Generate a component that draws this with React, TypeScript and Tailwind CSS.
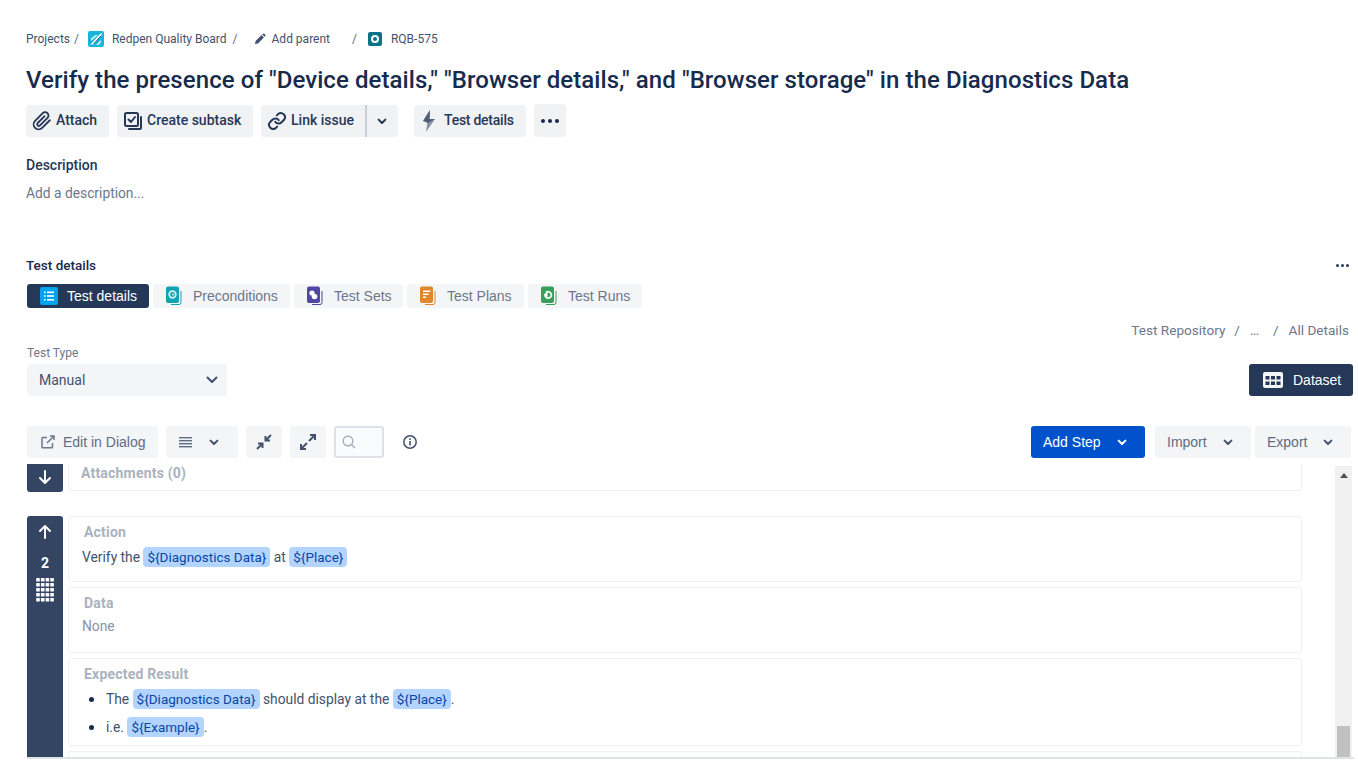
import React from "react";

const Chev = ({ c = "#42526e", s = 16 }: { c?: string; s?: number }) => (
  <svg width={s} height={s} viewBox="0 0 16 16" fill="none"><path d="M4.6 6.6 8 10l3.4-3.4" stroke={c} strokeWidth="2" strokeLinecap="round" strokeLinejoin="round" /></svg>
);

const Var = ({ children }: { children: React.ReactNode }) => (
  <span className="inline-block h-[20px] leading-[20px] px-[4px] rounded-[4px] bg-[#b3d4ff] text-[#0747a6] text-[13.5px]">{children}</span>
);

const TabIcon = ({ c, children }: { c: string; children?: React.ReactNode }) => (
  <svg width="18" height="20" viewBox="0 0 18 20" fill="none">
    <path d="M16 5v11.5a2 2 0 0 1-2 2H6" stroke={c} strokeWidth="1" fill="none" />
    <rect x="1" y="0.5" width="13" height="16.5" rx="2" fill={c} />
    {children}
  </svg>
);

const Tab = ({ label, icon, w, gap = "gap-[10px]" }: { label: string; icon: React.ReactNode; w: string; gap?: string }) => (
  <div className={`${w} ${gap} h-[24px] rounded-[3px] bg-[#f4f5f7] flex items-center pl-[12px] text-[14px] text-[#6b778c]`}>
    {icon}
    <span>{label}</span>
  </div>
);

const ABtn = ({ children, cls }: { children: React.ReactNode; cls: string }) => (
  <div className={`h-[32px] rounded-[3px] bg-[#f1f2f4] flex items-center whitespace-nowrap text-[14px] font-medium text-[#253858] ${cls}`}>{children}</div>
);

const TBtn = ({ children, cls }: { children: React.ReactNode; cls: string }) => (
  <div className={`h-[32px] rounded-[3px] bg-[#f4f5f7] flex items-center text-[14px] text-[#5e6c84] ${cls}`}>{children}</div>
);

const Card = ({ title, h, children, mt = "mt-[5px]" }: { title: string; h: string; children?: React.ReactNode; mt?: string }) => (
  <div className={`${h} ${mt} w-[1234px] border border-[#f0f1f3] rounded-[3px] pl-[14px] pt-[5px] text-[13.8px] text-[#42526e]`}>
    <div className="font-bold text-[#aab2c0] text-[14px] tracking-[0.2px] leading-[20px] ml-[1px]">{title}</div>
    {children}
  </div>
);

const Grip = () => (
  <svg width="18" height="24" viewBox="0 0 18 24" fill="#fff">
    {[0, 1, 2, 3, 4].map((r) => [0, 1, 2, 3].map((c) => <rect key={`${r}${c}`} x={c * 4.7 + 0.2} y={r * 5} width="3.6" height="3.6" rx="0.6" />))}
  </svg>
);

export default function App() {
  return (
    <div className="w-[1358px] h-[772px] overflow-hidden bg-white relative font-['Roboto',sans-serif] text-[#172b4d]">
      <div className="pl-[26px] pt-[29px]">
        {/* breadcrumb */}
        <div className="h-[20px] flex items-center text-[12px] text-[#42526e]">
          <span>Projects</span>
          <span className="ml-[4px] text-[#5e6c84]">/</span>
          <svg className="ml-[9px]" width="16" height="16" viewBox="0 0 16 16">
            <rect width="16" height="16" rx="2" fill="#17b5dc" />
            <path d="M2.5 13.5 12 3l2-1-.6 2.6L5.5 13.5z" fill="#fff" />
            <path d="M3 7.5 7.5 4H10L3 10zM8 14l5-5v2.5L10.5 14z" fill="#d4f1f8" />
            <path d="M5.5 13 13 5" stroke="#0f5f8a" strokeWidth="1" />
          </svg>
          <span className="ml-[8px]">Redpen Quality Board</span>
          <span className="ml-[6px] text-[#5e6c84]">/</span>
          <svg className="ml-[16px]" width="12" height="12" viewBox="0 0 12 12" fill="#42526e"><path d="M1 11l.6-3L7.5 2.1l2.4 2.4L4 10.4zM8.2 1.4 9 .7a1 1 0 0 1 1.3 0l1 1a1 1 0 0 1 0 1.3l-.7.8z" /></svg>
          <span className="ml-[6px]">Add parent</span>
          <span className="ml-[22px] text-[#5e6c84]">/</span>
          <svg className="ml-[11px]" width="14" height="14" viewBox="0 0 14 14">
            <rect width="14" height="14" rx="2" fill="#0b7285" />
            <circle cx="7" cy="7" r="3" fill="none" stroke="#fff" strokeWidth="2" />
          </svg>
          <span className="ml-[9px]">RQB-575</span>
        </div>
        {/* title */}
        <h1 className="mt-[13px] h-[36px] leading-[36px] text-[24px] tracking-[0.07px] font-medium text-[#172b4d] whitespace-nowrap">
          Verify the presence of "Device details," "Browser details," and "Browser storage" in the Diagnostics Data
        </h1>
        {/* actions */}
        <div className="mt-[6px] flex items-center">
          <ABtn cls="w-[83px] pl-[6px] gap-[4px]">
            <svg width="20" height="20" viewBox="0 0 24 24" fill="none" stroke="#253858" strokeWidth="2.2" strokeLinecap="round" strokeLinejoin="round"><path d="M21.4 11.1 12.2 20.3a6 6 0 0 1-8.5-8.5l9.2-9.2a4 4 0 0 1 5.7 5.7l-9.2 9.2a2 2 0 0 1-2.8-2.8l8.5-8.5" /></svg>
            Attach
          </ABtn>
          <ABtn cls="w-[136px] ml-[8px] pl-[6px] gap-[4px]">
            <svg width="20" height="20" viewBox="0 0 20 20" fill="none" stroke="#253858" strokeWidth="2"><rect x="2" y="2" width="13" height="13" rx="1.5" /><path d="M5.5 8.5 8 11l4-5" strokeLinecap="round" strokeLinejoin="round" /><path d="M18 6v11a1 1 0 0 1-1 1H6" strokeLinecap="round" /></svg>
            Create subtask
          </ABtn>
          <ABtn cls="w-[137px] ml-[8px] pl-[6px] gap-[4px]">
            <svg width="20" height="20" viewBox="0 0 24 24" fill="none" stroke="#253858" strokeWidth="2.4" strokeLinecap="round" strokeLinejoin="round"><path d="M10 13a5 5 0 0 0 7.5.5l3-3a5 5 0 0 0-7-7l-1.7 1.7" /><path d="M14 11a5 5 0 0 0-7.5-.5l-3 3a5 5 0 0 0 7 7l1.7-1.7" /></svg>
            <span>Link issue</span>
            <span className="ml-[7px] w-[2px] h-[32px] bg-[#c9ced8]" />
            <span className="ml-[3px]"><Chev c="#253858" /></span>
          </ABtn>
          <ABtn cls="w-[112px] ml-[16px] pl-[7px] gap-[7px] tracking-[-0.25px]">
            <svg width="16" height="24" viewBox="0 0 16 24"><path d="M9 1 2 12h4.5L5 23l9-13H8.5z" fill="#8993a4" /><path d="M9 1 2 12l5 2 7-4H8.5z" fill="#505f79" /></svg>
            Test details
          </ABtn>
          <ABtn cls="w-[32px] h-[33px] ml-[8px] justify-center gap-[3px]">
            <span className="w-[4px] h-[4px] rounded-full bg-[#172b4d]" />
            <span className="w-[4px] h-[4px] rounded-full bg-[#172b4d]" />
            <span className="w-[4px] h-[4px] rounded-full bg-[#172b4d]" />
          </ABtn>
        </div>
        {/* description */}
        <div className="mt-[18px] h-[20px] leading-[20px] text-[14px] font-medium text-[#253858]">Description</div>
        <div className="mt-[8px] h-[20px] leading-[20px] text-[13.8px] text-[#6b778c]">Add a description...</div>
        {/* test details */}
        <div className="mt-[52px] h-[20px] leading-[20px] text-[13.5px] font-medium text-[#172b4d] flex items-center pr-[9px]">
          <span>Test details</span>
          <span className="ml-auto flex gap-[2px]">
            <span className="w-[3px] h-[3px] rounded-full bg-[#253858]" />
            <span className="w-[3px] h-[3px] rounded-full bg-[#253858]" />
            <span className="w-[3px] h-[3px] rounded-full bg-[#253858]" />
          </span>
        </div>
        {/* lower area in Arial metrics */}
        <div className="font-['Liberation_Sans',Arial,sans-serif]">
          <div className="mt-[9px] ml-[1px] flex gap-[4px]">
            <div className="w-[122px] h-[24px] rounded-[3px] bg-[#253858] flex items-center pl-[13px] gap-[9px] text-[14px] text-white">
              <svg width="18" height="18" viewBox="0 0 18 18"><rect width="18" height="18" rx="2" fill="#00a3ed" /><g fill="#fff"><rect x="4" y="4.5" width="1.6" height="1.6" /><rect x="7" y="4.5" width="7" height="1.6" /><rect x="4" y="8.2" width="1.6" height="1.6" /><rect x="7" y="8.2" width="7" height="1.6" /><rect x="4" y="12" width="1.6" height="1.6" /><rect x="7" y="12" width="7" height="1.6" /></g></svg>
              <span>Test details</span>
            </div>
            <Tab w="w-[137px]" label="Preconditions" icon={<TabIcon c="#12a3b0"><circle cx="7.5" cy="8.5" r="4.2" fill="#cdeef2" /><circle cx="7.5" cy="8.5" r="2.4" fill="#12a3b0" /><circle cx="8" cy="8.5" r="1" fill="#cdeef2" /></TabIcon>} />
            <Tab w="w-[109px]" label="Test Sets" icon={<TabIcon c="#4f46a5"><circle cx="6" cy="7" r="2.6" fill="#fff" /><circle cx="8.5" cy="10.5" r="2.8" fill="#fff" /></TabIcon>} />
            <Tab w="w-[117px]" label="Test Plans" icon={<TabIcon c="#e0862b"><path d="M4 4.5h7.5v1.6H4zM4 7.5h5.5v1.6H4zM4 10.5h3v1.6H4z" fill="#fff" /></TabIcon>} />
            <Tab w="w-[114px]" label="Test Runs" icon={<TabIcon c="#36a05a"><path d="M5 9a3.2 3.2 0 1 0 1-2.4" fill="none" stroke="#fff" strokeWidth="1.7" /><path d="M3.5 8.5 7.5 6v5z" fill="#fff" /></TabIcon>} />
          </div>
          <div className="mt-[13px] pr-[9px] h-[18px] flex justify-end items-center text-[13.6px] text-[#6b778c] font-['Roboto',sans-serif]">
            <span>Test Repository</span>
            <span className="ml-[9px]">/</span>
            <span className="ml-[10px] w-[13px] tracking-[1px]">…</span>
            <span className="ml-[10px]">/</span>
            <span className="ml-[10px]">All Details</span>
          </div>
          <div className="flex items-end ml-[1px] pr-[5px]">
            <div>
              <div className="mt-[6px] h-[16px] leading-[16px] text-[12px] font-['Roboto',sans-serif] text-[#6b778c]">Test Type</div>
              <div className="mt-[3px] w-[200px] h-[32px] rounded-[3px] bg-[#f4f5f7] flex items-center justify-between pl-[12px] pr-[7px] text-[14px] text-[#42526e] font-['Roboto',sans-serif]">
                Manual
                <svg width="16" height="16" viewBox="0 0 16 16" fill="none"><path d="M3.5 5.5 8 10l4.5-4.5" stroke="#42526e" strokeWidth="2" strokeLinecap="round" strokeLinejoin="round" /></svg>
              </div>
            </div>
            <div className="ml-auto w-[104px] h-[32px] rounded-[3px] bg-[#253858] flex items-center pl-[14px] gap-[10px] text-[14px] text-white">
              <svg width="20" height="16" viewBox="0 0 20 16"><rect width="20" height="16" rx="2" fill="#f4f5f7" /><g fill="#253858"><rect x="2.5" y="4" width="4" height="3.5" /><rect x="8" y="4" width="4" height="3.5" /><rect x="13.5" y="4" width="4" height="3.5" /><rect x="2.5" y="9.5" width="4" height="3.5" /><rect x="8" y="9.5" width="4" height="3.5" /><rect x="13.5" y="9.5" width="4" height="3.5" /></g></svg>
              Dataset
            </div>
          </div>
          {/* toolbar */}
          <div className="mt-[30px] ml-[1px] flex items-center pr-[7px]">
            <TBtn cls="w-[131px] pl-[13px] gap-[7px]">
              <svg width="16" height="16" viewBox="0 0 16 16" fill="none" stroke="#6b778c" strokeWidth="1.5"><path d="M12.5 9v4a.8.8 0 0 1-.8.8H2.8a.8.8 0 0 1-.8-.8V4.2a.8.8 0 0 1 .8-.8H7" /><path d="M7 9l7-7M10 2h4v4" /></svg>
              Edit in Dialog
            </TBtn>
            <TBtn cls="w-[72px] ml-[8px] pl-[13px] gap-[13px]">
              <svg width="14" height="12" viewBox="0 0 14 12" fill="#5e6c84"><rect y="1" width="13" height="1.4" /><rect y="4" width="13" height="1.4" /><rect y="7" width="13" height="1.4" /><rect y="10" width="13" height="1.4" /></svg>
              <Chev />
            </TBtn>
            <TBtn cls="w-[36px] ml-[8px] justify-center">
              <svg width="18" height="18" viewBox="0 0 18 18" fill="none" stroke="#42526e" strokeWidth="2"><path d="M16 2l-5 5M10.5 3v4.5H15" /><path d="M2 16l5-5M7.5 15v-4.5H3" /></svg>
            </TBtn>
            <TBtn cls="w-[36px] ml-[8px] justify-center">
              <svg width="18" height="18" viewBox="0 0 18 18" fill="none" stroke="#42526e" strokeWidth="2"><path d="M10 8l6-6M11 2h5v5" /><path d="M8 10l-6 6M7 16H2v-5" /></svg>
            </TBtn>
            <div className="w-[50px] h-[32px] ml-[8px] rounded-[3px] border-2 border-[#dfe1e6] bg-[#fafbfc] flex items-center pl-[5px]">
              <svg width="16" height="16" viewBox="0 0 16 16" fill="none" stroke="#a5adba" strokeWidth="1.4"><circle cx="7" cy="7" r="4.8" /><path d="M10.5 10.5l3.5 3.5" /></svg>
            </div>
            <svg className="ml-[18px]" width="16" height="16" viewBox="0 0 16 16" fill="none"><circle cx="8" cy="8" r="6.2" stroke="#42526e" strokeWidth="1.5" /><rect x="7.2" y="7" width="1.6" height="4.5" fill="#42526e" /><rect x="7.2" y="4.4" width="1.6" height="1.6" fill="#42526e" /></svg>
            <div className="ml-auto w-[114px] h-[32px] rounded-[3px] bg-[#0052cc] flex items-center pl-[12px] gap-[13px] text-[14px] text-white">
              Add Step
              <Chev c="#fff" />
            </div>
            <TBtn cls="w-[96px] ml-[10px] pl-[12px] gap-[13px]">Import<Chev /></TBtn>
            <TBtn cls="w-[96px] ml-[4px] pl-[12px] gap-[13px]">Export<Chev /></TBtn>
          </div>
        </div>
        {/* steps */}
        <div className="mt-[6px] ml-[1px] h-[293px] relative overflow-hidden flex font-['Roboto',sans-serif]">
          <div className="w-[36px] shrink-0">
            <div className="h-[28px] bg-[#344563] rounded-b-[3px] flex items-center justify-center pb-[2px]">
              <svg width="16" height="16" viewBox="0 0 16 16" fill="none" stroke="#fff" strokeWidth="2" strokeLinecap="round" strokeLinejoin="round"><path d="M8 2v12M3 9l5 5 5-5" /></svg>
            </div>
            <div className="mt-[24px] h-[241px] bg-[#344563] rounded-t-[3px] flex flex-col items-center pt-[8px] text-white">
              <svg width="16" height="16" viewBox="0 0 16 16" fill="none" stroke="#fff" strokeWidth="2" strokeLinecap="round" strokeLinejoin="round"><path d="M8 14V2M3 7l5-5 5 5" /></svg>
              <div className="mt-[13px] h-[20px] leading-[20px] text-[14px] font-bold">2</div>
              <div className="mt-[5px]"><Grip /></div>
            </div>
          </div>
          <div className="ml-[5px]">
            <div className="h-[28px] w-[1234px] -mt-[1px] border-b border-x border-[#f0f1f3] rounded-b-[3px] pl-[12px] font-bold text-[#aab2c0] text-[14px] tracking-[0.2px] leading-[20px]">Attachments (0)</div>
            <Card title="Action" h="h-[66px]" mt="mt-[25px]">
              <div className="mt-[5px] h-[20px] leading-[20px] -ml-[1px] whitespace-nowrap">Verify the <Var>{"${Diagnostics Data}"}</Var> at <Var>{"${Place}"}</Var></div>
            </Card>
            <Card title="Data" h="h-[66px]">
              <div className="mt-[3px] h-[20px] leading-[20px] -ml-[1px] text-[#8993a4]">None</div>
            </Card>
            <Card title="Expected Result" h="h-[88px]">
              <ul className="mt-[5px] -ml-[1px]">
                <li className="h-[20px] leading-[20px] flex items-center whitespace-pre">
                  <span className="ml-[7px] w-[5px] h-[5px] rounded-full bg-[#172b4d]" />
                  <span className="ml-[12px]">The <Var>{"${Diagnostics Data}"}</Var> should display at the <Var>{"${Place}"}</Var>.</span>
                </li>
                <li className="mt-[8px] h-[20px] leading-[20px] flex items-center whitespace-pre">
                  <span className="ml-[7px] w-[5px] h-[5px] rounded-full bg-[#172b4d]" />
                  <span className="ml-[12px]">i.e. <Var>{"${Example}"}</Var>.</span>
                </li>
              </ul>
            </Card>
            <Card title="" h="h-[40px]" />
          </div>
          <div className="ml-[33px] mt-[2px] w-[17px] h-[291px] bg-[#f1f1f1] flex flex-col items-center relative">
            <svg className="mt-[7px]" width="8" height="5" viewBox="0 0 8 5"><path d="M4 0l4 5H0z" fill="#505050" /></svg>
            <div className="absolute bottom-0 w-[13px] h-[31px] bg-[#c1c1c1]" />
          </div>
        </div>
        <div className="w-[1327px] h-[2px] ml-[1px] bg-[#dfe3e6]" />
      </div>
    </div>
  );
}
